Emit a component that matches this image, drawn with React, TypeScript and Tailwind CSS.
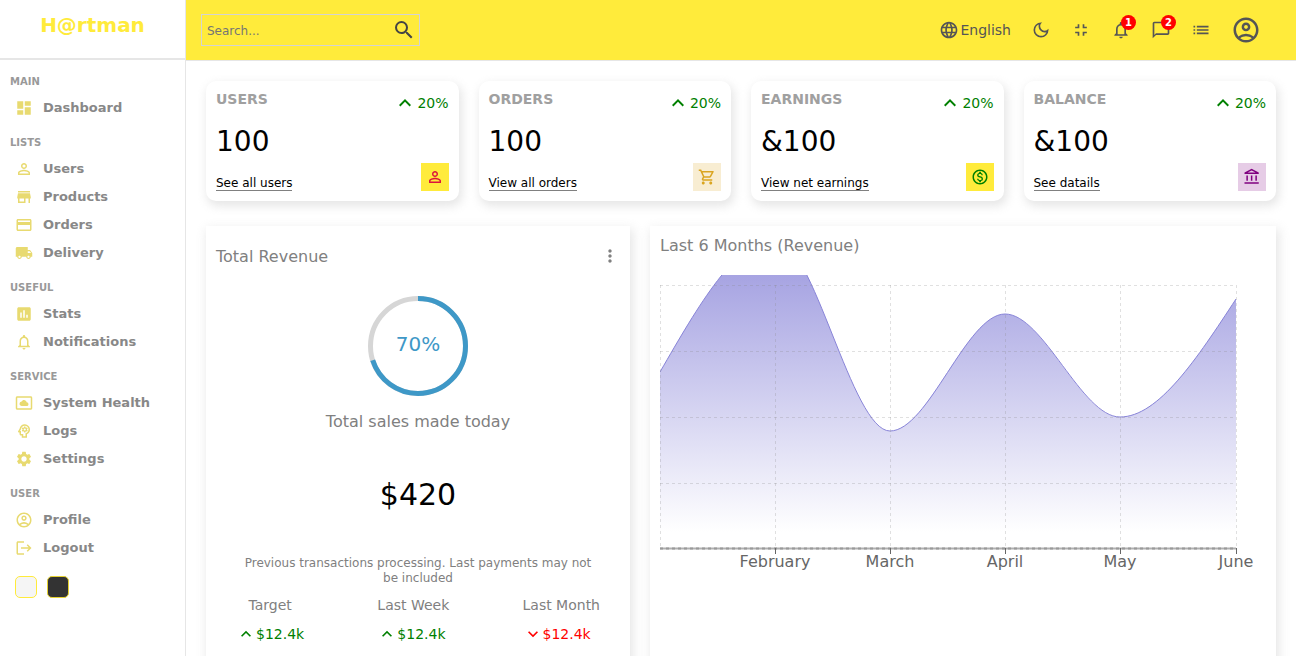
import type { IconType } from 'react-icons';
import {
  MdChatBubbleOutline,
  MdCreditCard,
  MdDashboard,
  MdFullscreenExit,
  MdInsertChart,
  MdKeyboardArrowDown,
  MdKeyboardArrowUp,
  MdLanguage,
  MdList,
  MdLocalShipping,
  MdLogout,
  MdMoreVert,
  MdNotificationsNone,
  MdOutlineAccountBalance,
  MdOutlineAccountCircle,
  MdOutlineDarkMode,
  MdOutlineMonetizationOn,
  MdOutlinePsychology,
  MdOutlineShoppingCart,
  MdPersonOutline,
  MdSearch,
  MdSettings,
  MdSettingsSystemDaydream,
  MdStore,
} from 'react-icons/md';

const navSections: { title: string; items: { label: string; icon: IconType }[] }[] = [
  { title: 'MAIN', items: [{ label: 'Dashboard', icon: MdDashboard }] },
  {
    title: 'LISTS',
    items: [
      { label: 'Users', icon: MdPersonOutline },
      { label: 'Products', icon: MdStore },
      { label: 'Orders', icon: MdCreditCard },
      { label: 'Delivery', icon: MdLocalShipping },
    ],
  },
  {
    title: 'USEFUL',
    items: [
      { label: 'Stats', icon: MdInsertChart },
      { label: 'Notifications', icon: MdNotificationsNone },
    ],
  },
  {
    title: 'SERVICE',
    items: [
      { label: 'System Health', icon: MdSettingsSystemDaydream },
      { label: 'Logs', icon: MdOutlinePsychology },
      { label: 'Settings', icon: MdSettings },
    ],
  },
  {
    title: 'USER',
    items: [
      { label: 'Profile', icon: MdOutlineAccountCircle },
      { label: 'Logout', icon: MdLogout },
    ],
  },
];

const widgets = [
  { title: 'USERS', value: '100', link: 'See all users', icon: MdPersonOutline, iconClass: 'bg-[#ffeb3b] text-[#dc143c]' },
  { title: 'ORDERS', value: '100', link: 'View all orders', icon: MdOutlineShoppingCart, iconClass: 'bg-[#f8edd2] text-[#daa520]' },
  { title: 'EARNINGS', value: '&100', link: 'View net earnings', icon: MdOutlineMonetizationOn, iconClass: 'bg-[#ffeb3b] text-[#008000]' },
  { title: 'BALANCE', value: '&100', link: 'See datails', icon: MdOutlineAccountBalance, iconClass: 'bg-[#e6cce6] text-[#800080]' },
];

const summary = [
  { label: 'Target', up: true },
  { label: 'Last Week', up: true },
  { label: 'Last Month', up: false },
];

// chart coordinates, relative to the svg's top left corner
const points: [number, number][] = [
  [0, 97],
  [115, -36],
  [230, 156],
  [345, 39],
  [460, 142],
  [576, 24],
];
const chartBottom = 273;
const gridY = [10, 76, 142, 208];
const ticks = [
  { x: 115, label: 'February' },
  { x: 230, label: 'March' },
  { x: 345, label: 'April' },
  { x: 460, label: 'May' },
  { x: 576, label: 'June' },
];

// same maths as d3's curveMonotoneX
function monotonePath(pts: [number, number][]) {
  const slopes = pts.slice(1).map((p, i) => (p[1] - pts[i][1]) / (p[0] - pts[i][0]));
  const tangents = pts.map((_, i) => {
    if (i === 0 || i === pts.length - 1) return 0;
    const h0 = pts[i][0] - pts[i - 1][0];
    const h1 = pts[i + 1][0] - pts[i][0];
    const s0 = slopes[i - 1];
    const s1 = slopes[i];
    const p = (s0 * h1 + s1 * h0) / (h0 + h1);
    return (Math.sign(s0) + Math.sign(s1)) * Math.min(Math.abs(s0), Math.abs(s1), 0.5 * Math.abs(p));
  });
  tangents[0] = (3 * slopes[0] - tangents[1]) / 2;
  const last = pts.length - 1;
  tangents[last] = (3 * slopes[last - 1] - tangents[last - 1]) / 2;

  let d = `M${pts[0][0]},${pts[0][1]}`;
  for (let i = 0; i < last; i++) {
    const dx = (pts[i + 1][0] - pts[i][0]) / 3;
    d += `C${pts[i][0] + dx},${pts[i][1] + dx * tangents[i]},${pts[i + 1][0] - dx},${pts[i + 1][1] - dx * tangents[i + 1]},${pts[i + 1][0]},${pts[i + 1][1]}`;
  }
  return d;
}

function Sidebar() {
  return (
    <aside className="w-[186px] flex-shrink-0 h-full bg-white border-r border-[#e6e6e6] flex flex-col">
      <div className="h-[60px] border-b-2 border-[#e6e6e6] flex justify-center pt-[11px]">
        <span className="text-[20px] leading-[28px] font-bold text-[#ffeb3b]">H@rtman</span>
      </div>
      <nav className="pt-4">
        {navSections.map((section) => (
          <div key={section.title} className="mb-[15px] last:mb-[14px]">
            <p className="pl-[10px] text-[10px] leading-[12px] font-bold text-[#999] mb-[6px]">{section.title}</p>
            {section.items.map((item) => {
              const Icon = item.icon;
              return (
                <div key={item.label} className="h-7 pl-[15px] flex items-center">
                  <Icon className="w-[18px] h-[18px] text-[#e8da70]" />
                  <span className="ml-[10px] text-[13px] font-bold text-[#888]">{item.label}</span>
                </div>
              );
            })}
          </div>
        ))}
      </nav>
      <div className="pl-[15px] flex gap-[10px]">
        <div className="w-[22px] h-[22px] rounded-[5px] border border-[#ffeb3b] bg-[#f5f5f5]" />
        <div className="w-[22px] h-[22px] rounded-[5px] border border-[#e6d230] bg-[#333]" />
      </div>
    </aside>
  );
}

function Navbar() {
  return (
    <header className="h-[61px] flex-shrink-0 bg-[#ffeb3b] border-b border-[#e6e6e6] flex items-center justify-between pl-[15px] pr-[35px] text-[#555]">
      <div className="w-[219px] h-8 border border-[#d3d3d3] flex items-center pl-[5px] pr-[3px]">
        <input
          placeholder="Search..."
          className="flex-1 min-w-0 pt-[2px] bg-transparent outline-none text-[12px] placeholder:text-[#757575]"
        />
        <MdSearch className="w-6 h-6 text-[#444]" />
      </div>
      <div className="flex items-center gap-5">
        <div className="flex items-center">
          <MdLanguage className="w-5 h-5" />
          <span className="ml-px text-[14px]">English</span>
        </div>
        <MdOutlineDarkMode className="w-5 h-5" />
        <MdFullscreenExit className="w-5 h-5" />
        <div className="relative">
          <MdNotificationsNone className="w-5 h-5" />
          <span className="absolute -top-[5px] -right-[5px] w-[15px] h-[15px] rounded-full bg-[#ff0000] text-white text-[10px] font-bold flex items-center justify-center">1</span>
        </div>
        <div className="relative">
          <MdChatBubbleOutline className="w-5 h-5" />
          <span className="absolute -top-[5px] -right-[5px] w-[15px] h-[15px] rounded-full bg-[#ff0000] text-white text-[10px] font-bold flex items-center justify-center">2</span>
        </div>
        <MdList className="w-5 h-5" />
        <MdOutlineAccountCircle className="w-[30px] h-[30px]" />
      </div>
    </header>
  );
}

function Widget({ title, value, link, icon: Icon, iconClass }: (typeof widgets)[number]) {
  return (
    <div className="flex-1 h-[120px] rounded-[10px] bg-white p-[10px] flex justify-between shadow-[2px_4px_10px_1px_rgba(201,201,201,0.47)]">
      <div className="flex flex-col justify-between">
        <span className="text-[14px] leading-4 font-bold text-[#a0a0a0]">{title}</span>
        <span className="text-[28px] leading-[33px] text-black">{value}</span>
        <span className="self-start pt-px text-[12px] leading-[14px] text-black border-b border-[#808080]">{link}</span>
      </div>
      <div className="flex flex-col justify-between items-end">
        <div className="flex items-center text-[14px] text-[#008000]">
          <MdKeyboardArrowUp className="w-6 h-6" />
          <span>20%</span>
        </div>
        <div className={`w-7 h-7 flex items-center justify-center ${iconClass}`}>
          <Icon className="w-[18px] h-[18px]" />
        </div>
      </div>
    </div>
  );
}

function Featured() {
  return (
    <div className="w-[424px] flex-shrink-0 h-[460px] bg-white shadow-[2px_4px_10px_1px_rgba(201,201,201,0.47)]">
      <div className="flex items-start justify-between px-[10px] pt-5 text-[#808080]">
        <span className="mt-px text-[16px] leading-5">Total Revenue</span>
        <MdMoreVert className="w-5 h-5" />
      </div>
      <div className="flex flex-col items-center pt-[29px]">
        <div className="relative w-[100px] h-[100px]">
          <svg viewBox="0 0 100 100" className="w-full h-full">
            <circle cx="50" cy="50" r="47.5" fill="none" stroke="#d6d6d6" strokeWidth="5" />
            <circle
              cx="50"
              cy="50"
              r="47.5"
              fill="none"
              stroke="#3e98c7"
              strokeWidth="5"
              strokeDasharray="208.9 298.5"
              transform="rotate(-90 50 50)"
            />
          </svg>
          <span className="absolute inset-0 pb-1 flex items-center justify-center text-[20px] text-[#3e98c7]">70%</span>
        </div>
        <p className="mt-4 text-[16px] leading-[20px] text-[#808080]">Total sales made today</p>
        <p className="mt-[45px] text-[30px] leading-[35px] text-black">$420</p>
        <p className="mt-[44px] w-[364px] text-center text-[12px] leading-[15px] text-[#808080]">
          Previous transactions processing. Last payments may not be included
        </p>
        <div className="w-full flex justify-between px-[30px] mt-[9px]">
          {summary.map((item) => (
            <div key={item.label} className="flex flex-col">
              <span className="text-center text-[14px] leading-[20px] text-[#808080]">{item.label}</span>
              <div className={`mt-[9px] flex items-center text-[14px] leading-5 ${item.up ? 'text-[#008000]' : 'text-[#ff0000]'}`}>
                {item.up ? <MdKeyboardArrowUp className="w-5 h-5" /> : <MdKeyboardArrowDown className="w-5 h-5" />}
                <span>$12.4k</span>
              </div>
            </div>
          ))}
        </div>
      </div>
    </div>
  );
}

function RevenueChart() {
  const curve = monotonePath(points);
  const area = `${curve}L576,${chartBottom}L0,${chartBottom}Z`;

  return (
    <div className="flex-1 h-[460px] bg-white p-[10px] shadow-[2px_4px_10px_1px_rgba(201,201,201,0.47)]">
      <p className="text-[16px] leading-[19px] text-[#808080] mb-5">Last 6 Months (Revenue)</p>
      <svg width="606" height="300" viewBox="0 0 606 300">
        <defs>
          <linearGradient id="total" x1="0" y1="0" x2="0" y2="1">
            <stop offset="5%" stopColor="#8884d8" stopOpacity={0.8} />
            <stop offset="95%" stopColor="#8884d8" stopOpacity={0} />
          </linearGradient>
        </defs>
        <path d={area} fill="url(#total)" />
        <path d={curve} fill="none" stroke="#8884d8" />
        {/* grid sits over the area in the reference */}
        <g stroke="#888" strokeOpacity={0.26} strokeDasharray="3 3" fill="none">
          {gridY.map((y) => (
            <line key={y} x1="0" x2="576" y1={y + 0.5} y2={y + 0.5} />
          ))}
          {[0, 115, 230, 345, 460, 576].map((x) => (
            <line key={x} x1={x + 0.5} x2={x + 0.5} y1="10" y2={chartBottom} />
          ))}
        </g>
        <line x1="0" x2="576" y1={chartBottom + 0.5} y2={chartBottom + 0.5} stroke="#b0b0b0" strokeWidth="2" />
        <line x1="0" x2="576" y1={chartBottom + 0.5} y2={chartBottom + 0.5} stroke="#999" strokeWidth="2" strokeDasharray="3 3" />
        {ticks.map((t) => (
          <g key={t.label}>
            <line x1={t.x + 0.5} x2={t.x + 0.5} y1={chartBottom} y2={chartBottom + 6} stroke="#666" />
            <text x={t.x} y={chartBottom + 19} textAnchor="middle" fontSize="16" fill="#666">
              {t.label}
            </text>
          </g>
        ))}
      </svg>
    </div>
  );
}

export default function App() {
  return (
    <div className="flex h-screen overflow-hidden bg-white font-['DejaVu_Sans',sans-serif]">
      <Sidebar />
      <div className="flex-1 min-w-0 flex flex-col">
        <Navbar />
        <main className="flex-1 overflow-hidden p-5">
          <div className="flex gap-5">
            {widgets.map((w) => (
              <Widget key={w.title} {...w} />
            ))}
          </div>
          <div className="flex gap-5 mt-[25px]">
            <Featured />
            <RevenueChart />
          </div>
        </main>
      </div>
    </div>
  );
}
